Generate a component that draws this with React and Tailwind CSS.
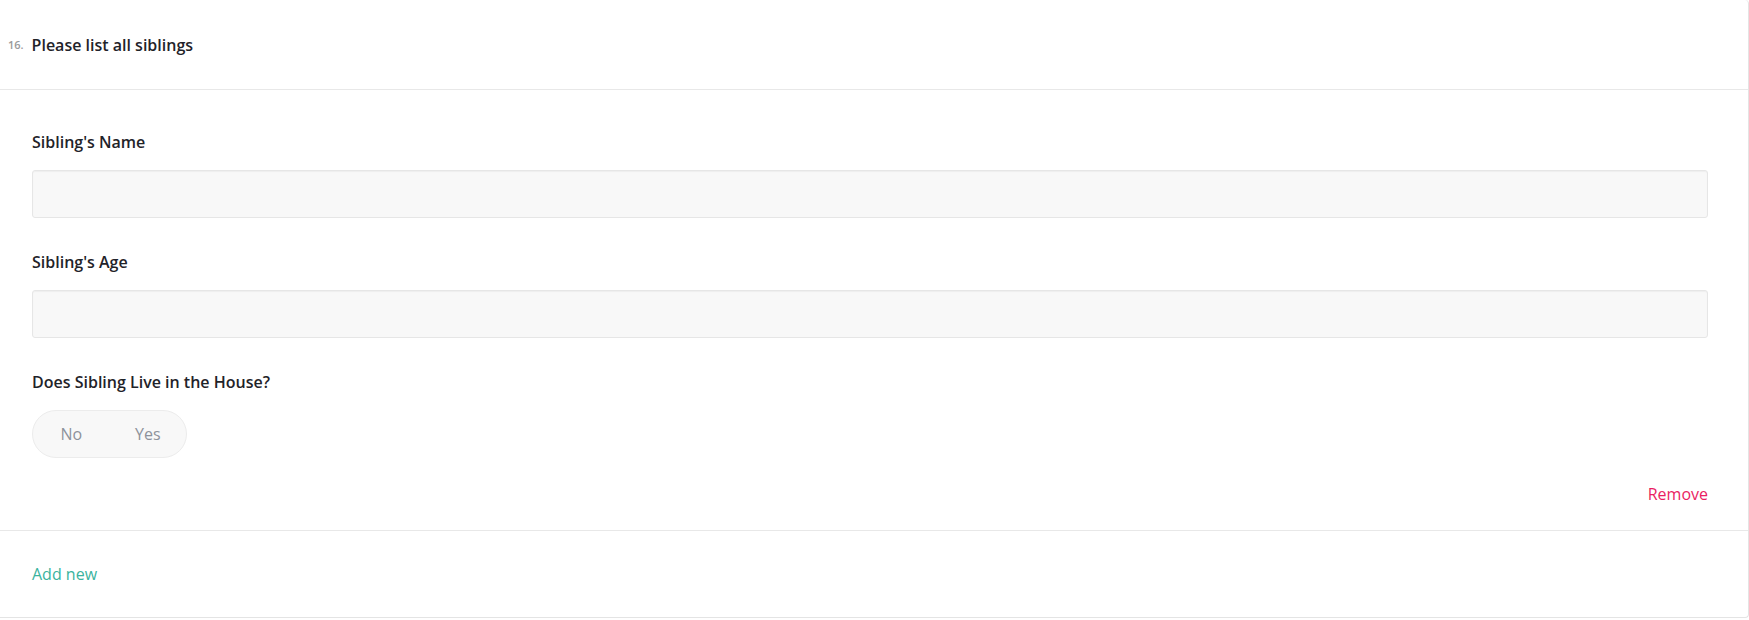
import React from "react";

const Field = ({ label }) => (
  <div className="mb-8">
    <label className="block text-base leading-6 font-semibold text-[#1f2329] mb-4">{label}</label>
    <div className="h-12 w-full rounded-[3px] border border-[#e6e6e6] bg-[#f8f8f8] shadow-[inset_0_1px_1px_rgba(0,0,0,0.04)]"></div>
  </div>
);

const App = () => {
  return (
    <div className="min-h-screen bg-white" style={{ fontFamily: '"Open Sans", sans-serif' }}>
      <div className="border-r border-b border-[#e4e4e4] rounded-r-[4px]">
        {/* header */}
        <div className="h-[90px] flex items-center pl-2 border-b border-[#e8e8e8]">
          <span className="text-[11px] font-semibold text-[#9a9a9a] mr-[8px] mt-[1px]">16.</span>
          <span className="text-base font-semibold text-[#1f2329]">Please list all siblings</span>
        </div>

        {/* entry */}
        <div className="pt-[40px] pl-8 pr-[40px] pb-6 border-b border-[#e8e8e8]">
          <Field label="Sibling's Name" />
          <Field label="Sibling's Age" />
          <div>
            <label className="block text-base leading-6 font-semibold text-[#1f2329] mb-4">Does Sibling Live in the House?</label>
            <div className="flex w-[155px] h-12 rounded-full border border-[#ececec] bg-[#f8f8f8] text-base text-[#8d929b]">
              <button className="flex-1 flex items-center justify-center">No</button>
              <button className="flex-1 flex items-center justify-center">Yes</button>
            </div>
          </div>
          <div className="flex justify-end mt-6">
            <button className="text-base leading-6 text-[#ea1e63]">Remove</button>
          </div>
        </div>

        {/* footer */}
        <div className="pl-8 py-[31px]">
          <button className="text-base leading-6 text-[#3bb39e]">Add new</button>
        </div>
      </div>
    </div>
  );
};

export default App;
